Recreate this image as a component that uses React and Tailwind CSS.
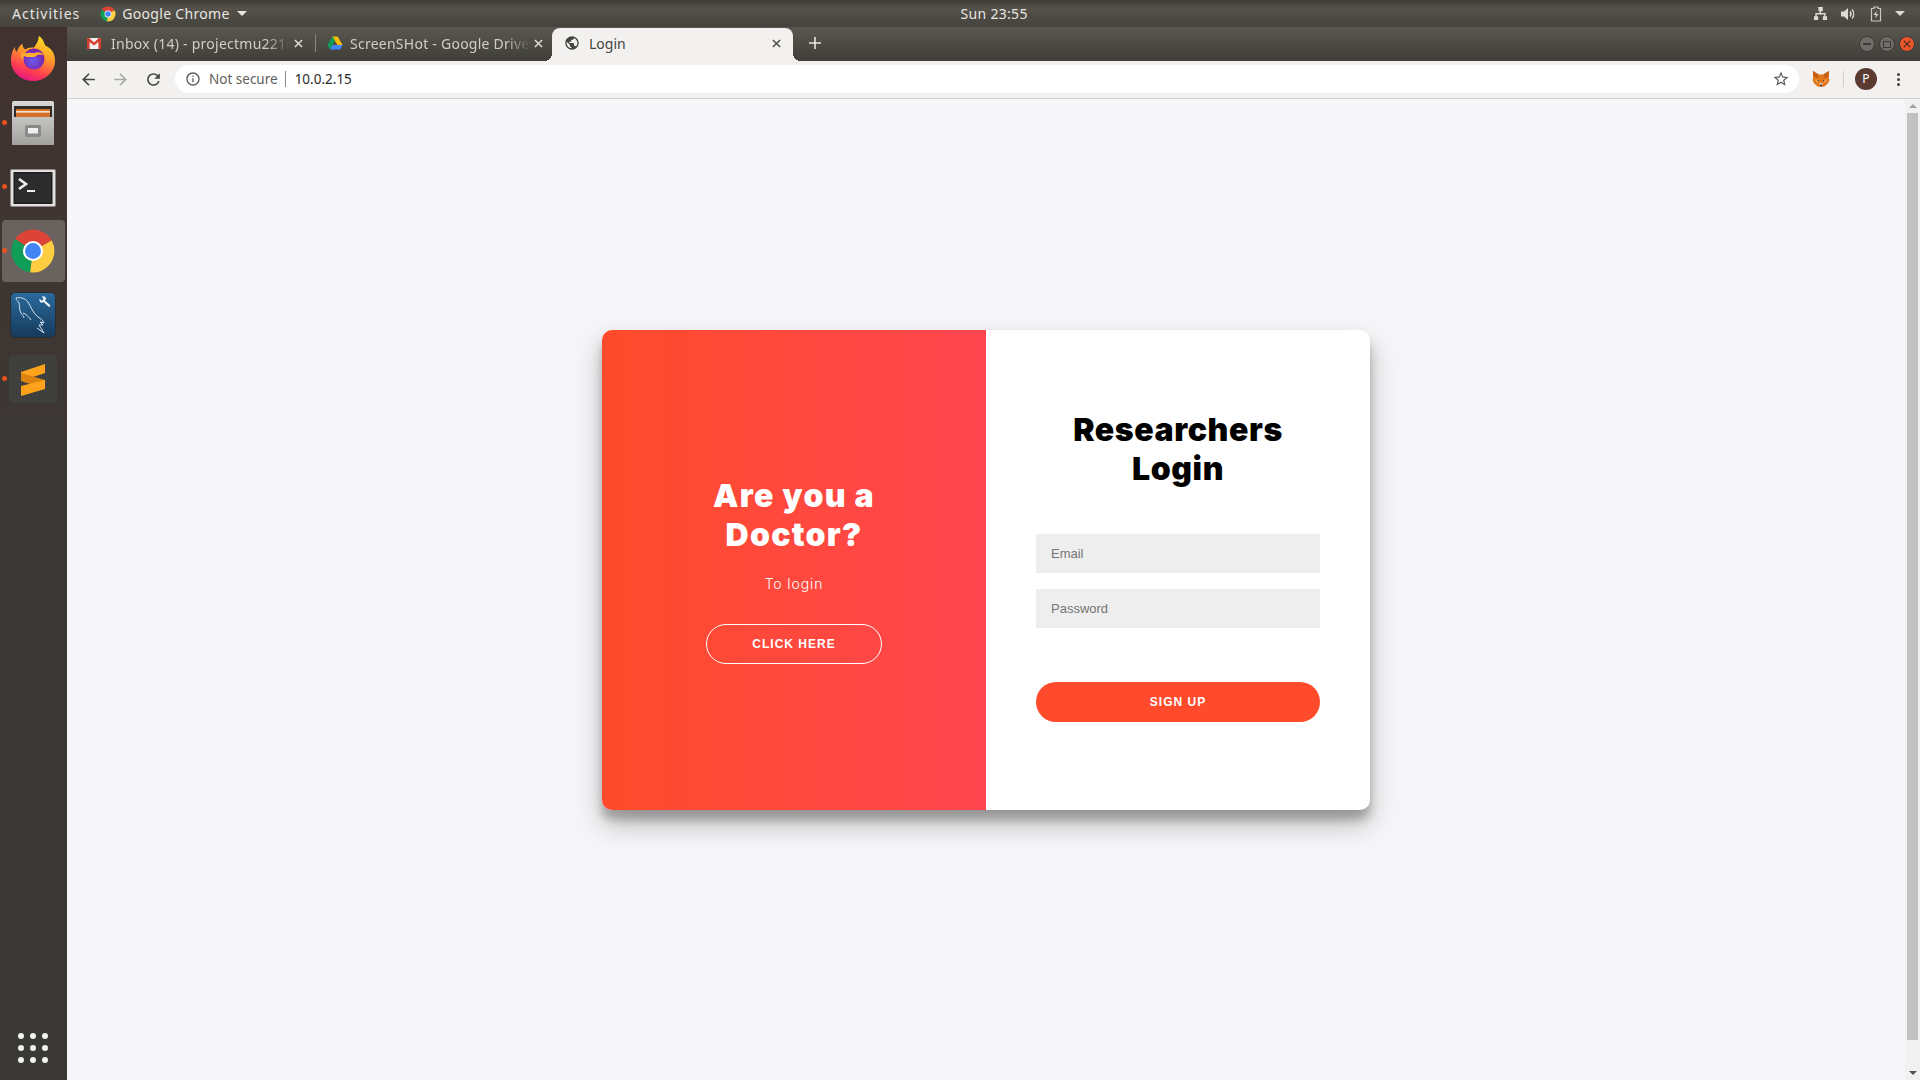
const UI_FONT = { fontFamily: '"Noto Sans", sans-serif' }

function Arrow({ className }) {
  return (
    <svg viewBox="0 0 24 24" className={className} fill="currentColor">
      <path d="M20 11H7.83l5.59-5.59L12 4l-8 8 8 8 1.41-1.41L7.83 13H20v-2z" />
    </svg>
  )
}

function CloseX({ className }) {
  return (
    <svg viewBox="0 0 10 10" className={className} stroke="currentColor" strokeWidth="1.5" fill="none">
      <path d="M1 1l8 8M9 1l-8 8" />
    </svg>
  )
}

function GmailIcon() {
  return (
    <svg viewBox="0 0 16 16" className="w-4 h-4 shrink-0">
      <rect x="1" y="3" width="14" height="11" fill="#f1f1f1" />
      <path d="M1 3h2.2L8 7.4 12.8 3H15v11h-2.6V6.9L8 10.6 3.6 6.9V14H1z" fill="#d23f31" />
    </svg>
  )
}

function DriveIcon() {
  return (
    <svg viewBox="0 0 16 16" className="w-4 h-4 shrink-0">
      <path d="M5.4 1.5h5.2l5 8.5h-5.2z" fill="#fbbc04" />
      <path d="M5.4 1.5L.4 10.2 3 14.6 8 6z" fill="#0f9d58" />
      <path d="M3 14.6h10.2l2.4-4.6H5.6z" fill="#4285f4" />
    </svg>
  )
}

function GlobeIcon() {
  return (
    <svg viewBox="0 0 24 24" className="w-4 h-4 shrink-0" fill="#45443f">
      <path d="M12 2C6.48 2 2 6.48 2 12s4.48 10 10 10 10-4.48 10-10S17.52 2 12 2zm-1 17.93c-3.95-.49-7-3.85-7-7.93 0-.62.08-1.21.21-1.79L9 15v1c0 1.1.9 2 2 2v1.93zm6.9-2.54c-.26-.81-1-1.39-1.9-1.39h-1v-3c0-.55-.45-1-1-1H8v-2h2c.55 0 1-.45 1-1V7h2c1.1 0 2-.9 2-2v-.41c2.93 1.19 5 4.06 5 7.41 0 2.08-.8 3.97-2.1 5.39z" />
    </svg>
  )
}

function ChromeLogo({ className }) {
  return (
    <svg viewBox="0 0 48 48" className={className}>
      <path d="M24 24L43.5 13A22.5 22.5 0 0 0 5.2 11.6z" fill="#db4437" />
      <path d="M24 24L5.2 11.6A22.5 22.5 0 0 0 21 46.3z" fill="#0f9d58" />
      <path d="M24 24L21 46.3A22.5 22.5 0 0 0 43.5 13z" fill="#ffcd40" />
      <circle cx="24" cy="24" r="10.5" fill="#fff" />
      <circle cx="24" cy="24" r="8.3" fill="#4285f4" />
    </svg>
  )
}

function FirefoxLogo() {
  return (
    <svg viewBox="0 0 48 48" className="w-[46px] h-[46px] -mt-[2px]">
      <defs>
        <linearGradient id="ff-a" x1="0.7" y1="0" x2="0.3" y2="1">
          <stop offset="0" stopColor="#ffe226" />
          <stop offset="0.4" stopColor="#ff9a2a" />
          <stop offset="0.75" stopColor="#ff3d50" />
          <stop offset="1" stopColor="#e31587" />
        </linearGradient>
        <radialGradient id="ff-b" cx="0.45" cy="0.6" r="0.6">
          <stop offset="0" stopColor="#6a5bf0" />
          <stop offset="1" stopColor="#7b1fa2" />
        </radialGradient>
      </defs>
      <path d="M30 1c5 3 5 7 7 10 6 3 10 8 10 16a23 21 0 0 1-46 0C1 20 3 16 5 12c0 3 1 5 2 6 1-4 3-7 6-9 0 3 1 5 3 6 3-2 6-2 9-2 3-4 5-7 5-12z" fill="url(#ff-a)" />
      <path d="M11 20c3-4 6-3 8-2 3-4 9-5 13-2 2 2 3 4 3 7-1 2-2 3-2 3l-16 3c-4-2-6-5-6-9z" fill="#ff9f2e" />
      <circle cx="25" cy="25" r="11" fill="url(#ff-b)" />
      <path d="M13 21c3-3 8-3 12-2 4-2 8-1 10 2-3-1-5-1-7 0-1 2-4 2-6 2-3 0-6 0-9-2z" fill="#ffb12b" />
    </svg>
  )
}

function FilesIcon() {
  return (
    <svg viewBox="0 0 44 44" className="w-11 h-11">
      <defs>
        <linearGradient id="files-a" x1="0" y1="0" x2="0" y2="1">
          <stop offset="0" stopColor="#d8d8d6" />
          <stop offset="1" stopColor="#9a9a98" />
        </linearGradient>
        <linearGradient id="files-b" x1="0" y1="0" x2="0" y2="1">
          <stop offset="0" stopColor="#c4c4c2" />
          <stop offset="1" stopColor="#a2a2a0" />
        </linearGradient>
      </defs>
      <rect x="1" y="0" width="42" height="44" rx="2" fill="url(#files-a)" />
      <rect x="3" y="5" width="38" height="12" fill="#2f2c2a" />
      <rect x="5" y="8" width="34" height="9" fill="#d9702a" />
      <rect x="5" y="10" width="34" height="1.6" fill="#f5e3d2" />
      <rect x="1" y="16" width="42" height="28" rx="1" fill="url(#files-b)" />
      <rect x="14" y="24" width="16" height="12" rx="1.5" fill="#8a8a88" />
      <rect x="17" y="27" width="10" height="5.500" fill="#f0f0f0" />
    </svg>
  )
}

function TerminalIcon() {
  return (
    <svg viewBox="0 0 46 38" className="w-[46px] h-[38px] mt-[2px]">
      <rect x="0.5" y="0.5" width="45" height="37" rx="1" fill="#e0e0de" />
      <rect x="3.500" y="3" width="39" height="32" fill="#1d1d1d" />
      <rect x="5" y="4.500" width="36" height="29" fill="#2c2c2c" />
      <path d="M9 10l7 5-7 5" stroke="#eee" strokeWidth="2.6" fill="none" />
      <rect x="17" y="21" width="8" height="2" fill="#eee" />
    </svg>
  )
}

function MysqlIcon() {
  return (
    <svg viewBox="0 0 46 46" className="w-[46px] h-[46px]">
      <defs>
        <linearGradient id="my-a" x1="0" y1="0" x2="0" y2="1">
          <stop offset="0" stopColor="#2a6a9c" />
          <stop offset="1" stopColor="#153a5c" />
        </linearGradient>
      </defs>
      <rect x="0.5" y="0.5" width="45" height="45" rx="5" fill="url(#my-a)" stroke="#2c2c2c" />
      <path d="M6 6c4-1 9 0 12 4 3 5 5 11 10 15 3 2 5 3 6 6l-4-1 3 3-4 0 5 8-7-5M6 6c0 2 2 3 3 5 1 3 0 7 2 10 1 2 3 3 3 5M13 21c3 1 5 3 8 7" stroke="#d4e0ea" strokeWidth="1" fill="none" />
      <path d="M32 4.500c2-.5 4 .5 4 2.500l-1 1.500 5 4.500c1 1 -.5 2.500-1.500 1.500l-5-4.500-1.500 .8c-2 0-3-2-2.500-4l2.500 2 1.500-1.500z" fill="#f2f5f7" />
    </svg>
  )
}

function SublimeIcon() {
  return (
    <svg viewBox="0 0 48 48" className="w-12 h-12 -mt-[1px]">
      <rect width="48" height="48" rx="4" fill="#3f3f3d" />
      <path d="M12 17L36 9v9l-24 8z" fill="#ffa21c" />
      <path d="M12 26l24 8v-9l-24-7z" fill="#dd8410" />
      <path d="M12 31L36 25v9l-24 7z" fill="#ffa21c" />
    </svg>
  )
}

function FoxIcon() {
  return (
    <svg viewBox="0 0 20 20" className="w-[18px] h-[18px]">
      <path d="M1 1l6.500 4h5L19 1l-.5 7 1 3.500-2 3.500-4 3.500h-7l-4-3.500-2-3.500 1-3.500z" fill="#e2761b" />
      <path d="M1 1l6.500 4-1 4-5-1zM19 1l-6.500 4 1 4 5-1z" fill="#c75f12" />
      <path d="M4 10.500l4 .5-1 3.500-3-2zM16 10.500l-4 .5 1 3.500 3-2z" fill="#f6a65a" />
      <path d="M6 11l2 .5-1 1.500zM14 11l-2 .5 1 1.500z" fill="#3a2a20" />
      <path d="M8 14.500h4l-1 3H9z" fill="#d7c1b3" />
      <path d="M9 16.500h2v1.500H9z" fill="#2a2a2a" />
    </svg>
  )
}

function Tab({ icon, title, active, width, pad, closePad, gap, dark }) {
  return (
    <div className={`relative flex items-center h-full pb-[3px] ${width} ${pad} ${closePad} ${active ? 'bg-[#f2f1f0] rounded-t-lg text-[#45443f]' : 'text-[#d0cec8]'}`}>
      {active && (
        <>
          <div className="absolute bottom-0 -left-2 w-2 h-2 bg-[radial-gradient(circle_at_0_0,transparent_8px,#f2f1f0_8px)]" />
          <div className="absolute bottom-0 -right-2 w-2 h-2 bg-[radial-gradient(circle_at_100%_0,transparent_8px,#f2f1f0_8px)]" />
        </>
      )}
      {icon}
      <span className={`${gap} flex-1 min-w-0 overflow-hidden whitespace-nowrap text-[14px] ${dark ? '' : 'tracking-[0.25px] [mask-image:linear-gradient(to_left,transparent,black_24px)]'}`}>{title}</span>
      <CloseX className={`ml-1 w-[9px] h-[9px] shrink-0 ${active ? 'text-[#45443f]' : 'text-[#e4e2dc]'}`} />
    </div>
  )
}

function DockItem({ children, running, active }) {
  return (
    <div className="relative h-16 flex items-center justify-center pr-[1px]">
      {active && <div className="absolute inset-x-[2px] top-[1px] bottom-[1px] rounded-[4px] bg-[#6a625e]" />}
      {running && <div className="absolute left-[2px] top-1/2 -mt-[3px] w-[5px] h-[5px] rounded-full bg-[#e95420]" />}
      <div className="relative flex">{children}</div>
    </div>
  )
}

function WinButton({ children, red }) {
  return (
    <div className={`w-4 h-4 rounded-full flex items-center justify-center border border-[#3a3935] ${red ? 'bg-[#e9552a]' : 'bg-[#6f6d67]'}`}>
      {children}
    </div>
  )
}

export default function App() {
  return (
    <div className="w-screen h-screen overflow-hidden flex flex-col bg-[#f6f5f7]">
      {/* Ubuntu top bar */}
      <div className="h-[27px] shrink-0 flex items-center bg-[linear-gradient(#3c3b36,#55524b_30%,#45433d)] text-[#e8e6e0] text-[14px] tracking-[0.3px]" style={UI_FONT}>
        <span className="ml-3 tracking-[1px]">Activities</span>
        <ChromeLogo className="ml-[20px] w-4 h-4" />
        <span className="ml-[6px]">Google Chrome</span>
        <div className="ml-[7px] w-0 h-0 border-x-[5px] border-x-transparent border-t-[5px] border-t-[#e8e6e0]" />
        <span className="ml-[714px] -mt-px">Sun 23:55</span>
        <div className="ml-auto flex items-center">
          <svg viewBox="0 0 16 16" className="w-[15px] h-[15px]" fill="#dcdad4">
            <path d="M5.5 1h5v4.5h-2V7.5H13.5V11H15v4h-4.5v-4H12V9H4v2h1.5v4H1v-4h1.5V7.5h4.500V5.500h-1z" />
          </svg>
          <svg viewBox="0 0 16 16" className="ml-3 w-4 h-4" fill="none" stroke="#dcdad4">
            <path d="M1 5.500h3L8 2v12l-4-3.500H1z" fill="#dcdad4" stroke="none" />
            <path d="M10 5.500a4 4 0 0 1 0 5M12 3.500a7 7 0 0 1 0 9" strokeWidth="1.4" />
          </svg>
          <svg viewBox="0 0 12 16" className="ml-[14px] w-3 h-4" fill="none" stroke="#c8c6c0">
            <path d="M4 1h4v1.500h2.500V15h-9V2.500H4z" strokeWidth="1.2" />
            <path d="M7 4.500L3.500 9H6l-1 3.500L8.500 8H6z" fill="#dcdad4" stroke="none" />
          </svg>
          <div className="ml-[13px] mr-[15px] w-0 h-0 border-x-[5px] border-x-transparent border-t-[5px] border-t-[#dcdad4]" />
        </div>
      </div>

      <div className="flex-1 min-h-0 flex">
        {/* Dock */}
        <div className="w-[67px] shrink-0 flex flex-col bg-[linear-gradient(#41322f,#3b3835_45%,#3a3935)]">
          <DockItem><FirefoxLogo /></DockItem>
          <DockItem running><FilesIcon /></DockItem>
          <DockItem running><TerminalIcon /></DockItem>
          <DockItem running active><ChromeLogo className="w-[46px] h-[46px]" /></DockItem>
          <DockItem><MysqlIcon /></DockItem>
          <DockItem running><SublimeIcon /></DockItem>
          <div className="mt-auto mb-[17px] ml-[18px] self-start grid grid-cols-3 gap-[6px]">
            {Array.from({ length: 9 }).map((_, i) => (
              <div key={i} className="w-[6px] h-[6px] rounded-full bg-[#f2f2f0]" />
            ))}
          </div>
        </div>

        <div className="flex-1 min-w-0 flex flex-col">
          {/* Tab strip */}
          <div className="h-[34px] shrink-0 flex items-end bg-[linear-gradient(#5a574f,#3f3e39)]" style={UI_FONT}>
            <div className="ml-2 h-[33px] flex items-center">
              <Tab icon={<GmailIcon />} title="Inbox (14) - projectmu221@" width="w-[240px]" pad="pl-[11px]" closePad="pr-[12px]" gap="ml-[9px]" />
              <div className="w-px h-[18px] mb-[3px] bg-[#8a8880]" />
              <Tab icon={<DriveIcon />} title="ScreenSHot - Google Drive" width="w-[236px]" pad="pl-[11px]" closePad="pr-[9px]" gap="ml-[7px]" />
              <Tab icon={<GlobeIcon />} title="Login" width="w-[241px]" pad="pl-[12px]" closePad="pr-[12px]" gap="ml-[9px]" active dark />
            </div>
            <svg viewBox="0 0 12 12" className="ml-[16px] mb-[12px] w-3 h-3" stroke="#e8e6e0" strokeWidth="1.6">
              <path d="M6 0v12M0 6h12" />
            </svg>
            <div className="ml-auto mr-[5px] mb-[9px] flex items-center gap-1">
              <WinButton><div className="w-2 h-[2px] bg-[#3a3935]" /></WinButton>
              <WinButton><div className="w-2 h-[7px] border border-[#3a3935]" /></WinButton>
              <WinButton red><CloseX className="w-2 h-2 text-[#4a2a1c]" /></WinButton>
            </div>
          </div>

          {/* Toolbar */}
          <div className="h-[38px] shrink-0 flex items-center pb-px bg-[#f2f1f0] border-b border-[#cfcfcd] text-[#45443f]" style={UI_FONT}>
            <Arrow className="ml-[12px] w-[19px] h-[19px] text-[#45443f]" />
            <Arrow className="ml-[13px] w-[19px] h-[19px] text-[#a8a7a3] rotate-180" />
            <svg viewBox="0 0 24 24" className="ml-[14px] w-[19px] h-[19px]" fill="#45443f">
              <path d="M17.65 6.35A7.958 7.958 0 0012 4c-4.42 0-7.99 3.58-7.99 8s3.57 8 7.99 8c3.73 0 6.84-2.55 7.73-6h-2.08A5.99 5.99 0 0112 18c-3.31 0-6-2.69-6-6s2.69-6 6-6c1.66 0 3.14.69 4.22 1.78L13 11h7V4l-2.35 2.35z" />
            </svg>
            <div className="ml-[12px] w-[1624px] h-[28px] rounded-full bg-white flex items-center text-[13.5px]">
              <svg viewBox="0 0 24 24" className="ml-[10px] w-4 h-4" fill="#5a5955">
                <path d="M11 7h2v2h-2zm0 4h2v6h-2zm1-9C6.48 2 2 6.48 2 12s4.48 10 10 10 10-4.48 10-10S17.52 2 12 2zm0 18c-4.41 0-8-3.59-8-8s3.59-8 8-8 8 3.59 8 8-3.59 8-8 8z" />
              </svg>
              <span className="ml-[8px] text-[#5f5e5a]">Not secure</span>
              <div className="ml-[7px] w-px h-[16px] bg-[#8a8985]" />
              <span className="ml-[9px] text-[#2a2a28]">10.0.2.15</span>
              <svg viewBox="0 0 24 24" className="ml-auto mr-[9px] w-[18px] h-[18px]" fill="#5a5955">
                <path d="M22 9.24l-7.19-.62L12 2 9.19 8.63 2 9.24l5.46 4.73L5.82 21 12 17.27 18.18 21l-1.63-7.03L22 9.24zM12 15.4l-3.76 2.27 1-4.28-3.32-2.88 4.38-.38L12 6.1l1.71 4.04 4.38.38-3.32 2.88 1 4.28L12 15.4z" />
              </svg>
            </div>
            <div className="ml-[13px] flex"><FoxIcon /></div>
            <div className="ml-[13px] w-px h-[16px] bg-[#d0cfcc]" />
            <div className="ml-[11px] w-[22px] h-[22px] rounded-full bg-[#5b3a32] text-white text-[12px] flex items-center justify-center">P</div>
            <div className="ml-[20px] flex flex-col gap-[2px]">
              <div className="w-[3px] h-[3px] rounded-full bg-[#45443f]" />
              <div className="w-[3px] h-[3px] rounded-full bg-[#45443f]" />
              <div className="w-[3px] h-[3px] rounded-full bg-[#45443f]" />
            </div>
          </div>

          {/* Page */}
          <div className="flex-1 min-h-0 flex">
            <div className="flex-1 min-w-0 flex justify-center items-start pt-[231px]">
              <div className="w-[768px] h-[480px] flex rounded-[10px] overflow-hidden bg-white shadow-[0_14px_28px_rgba(0,0,0,0.25),0_10px_10px_rgba(0,0,0,0.22)]">
                <div className="w-[384px] flex flex-col items-center justify-center text-white bg-[linear-gradient(to_right,#ff4b2b,#ff4650)]">
                  <h1 className="w-[240px] text-center text-[32px] leading-[39px] font-black tracking-[1.3px]" style={{ fontFamily: 'Inter, sans-serif' }}>Are you a Doctor?</h1>
                  <p className="mt-[20px] text-[14px] leading-5 font-light tracking-[0.9px]" style={{ fontFamily: 'Inter, sans-serif' }}>To login</p>
                  <button className="mt-[30px] mb-px w-[176px] h-10 rounded-[20px] border border-white text-[12px] font-bold tracking-[1px]" style={{ fontFamily: '"Liberation Sans", sans-serif' }}>CLICK HERE</button>
                </div>
                <div className="w-[384px] px-[50px] pt-[80px] flex flex-col" style={{ fontFamily: '"Liberation Sans", sans-serif' }}>
                  <h1 className="text-center text-[32px] leading-[39px] font-black text-black tracking-[0.6px]" style={{ fontFamily: 'Inter, sans-serif' }}>Researchers Login</h1>
                  <input placeholder="Email" className="mt-[46px] w-full h-[39px] bg-[#eeeeee] px-[15px] text-[13px] outline-none placeholder:text-[#757575]" />
                  <input placeholder="Password" className="mt-[16px] w-full h-[39px] bg-[#eeeeee] px-[15px] text-[13px] outline-none placeholder:text-[#757575]" />
                  <button className="mt-[54px] w-full h-10 rounded-[20px] bg-[#ff4b2b] text-white text-[12px] font-bold tracking-[1px]">SIGN UP</button>
                </div>
              </div>
            </div>

            {/* Scrollbar */}
            <div className="w-[15px] shrink-0 flex flex-col items-center bg-[#f1f1f1]">
              <div className="mt-[5px] w-0 h-0 border-x-[4px] border-x-transparent border-b-[4px] border-b-[#a3a3a3]" />
              <div className="mt-[5px] w-[11px] flex-1 bg-[#c1c1c1]" />
              <div className="mt-[31px] mb-[5px] w-0 h-0 border-x-[4px] border-x-transparent border-t-[4px] border-t-[#505050]" />
            </div>
          </div>
        </div>
      </div>
    </div>
  )
}
